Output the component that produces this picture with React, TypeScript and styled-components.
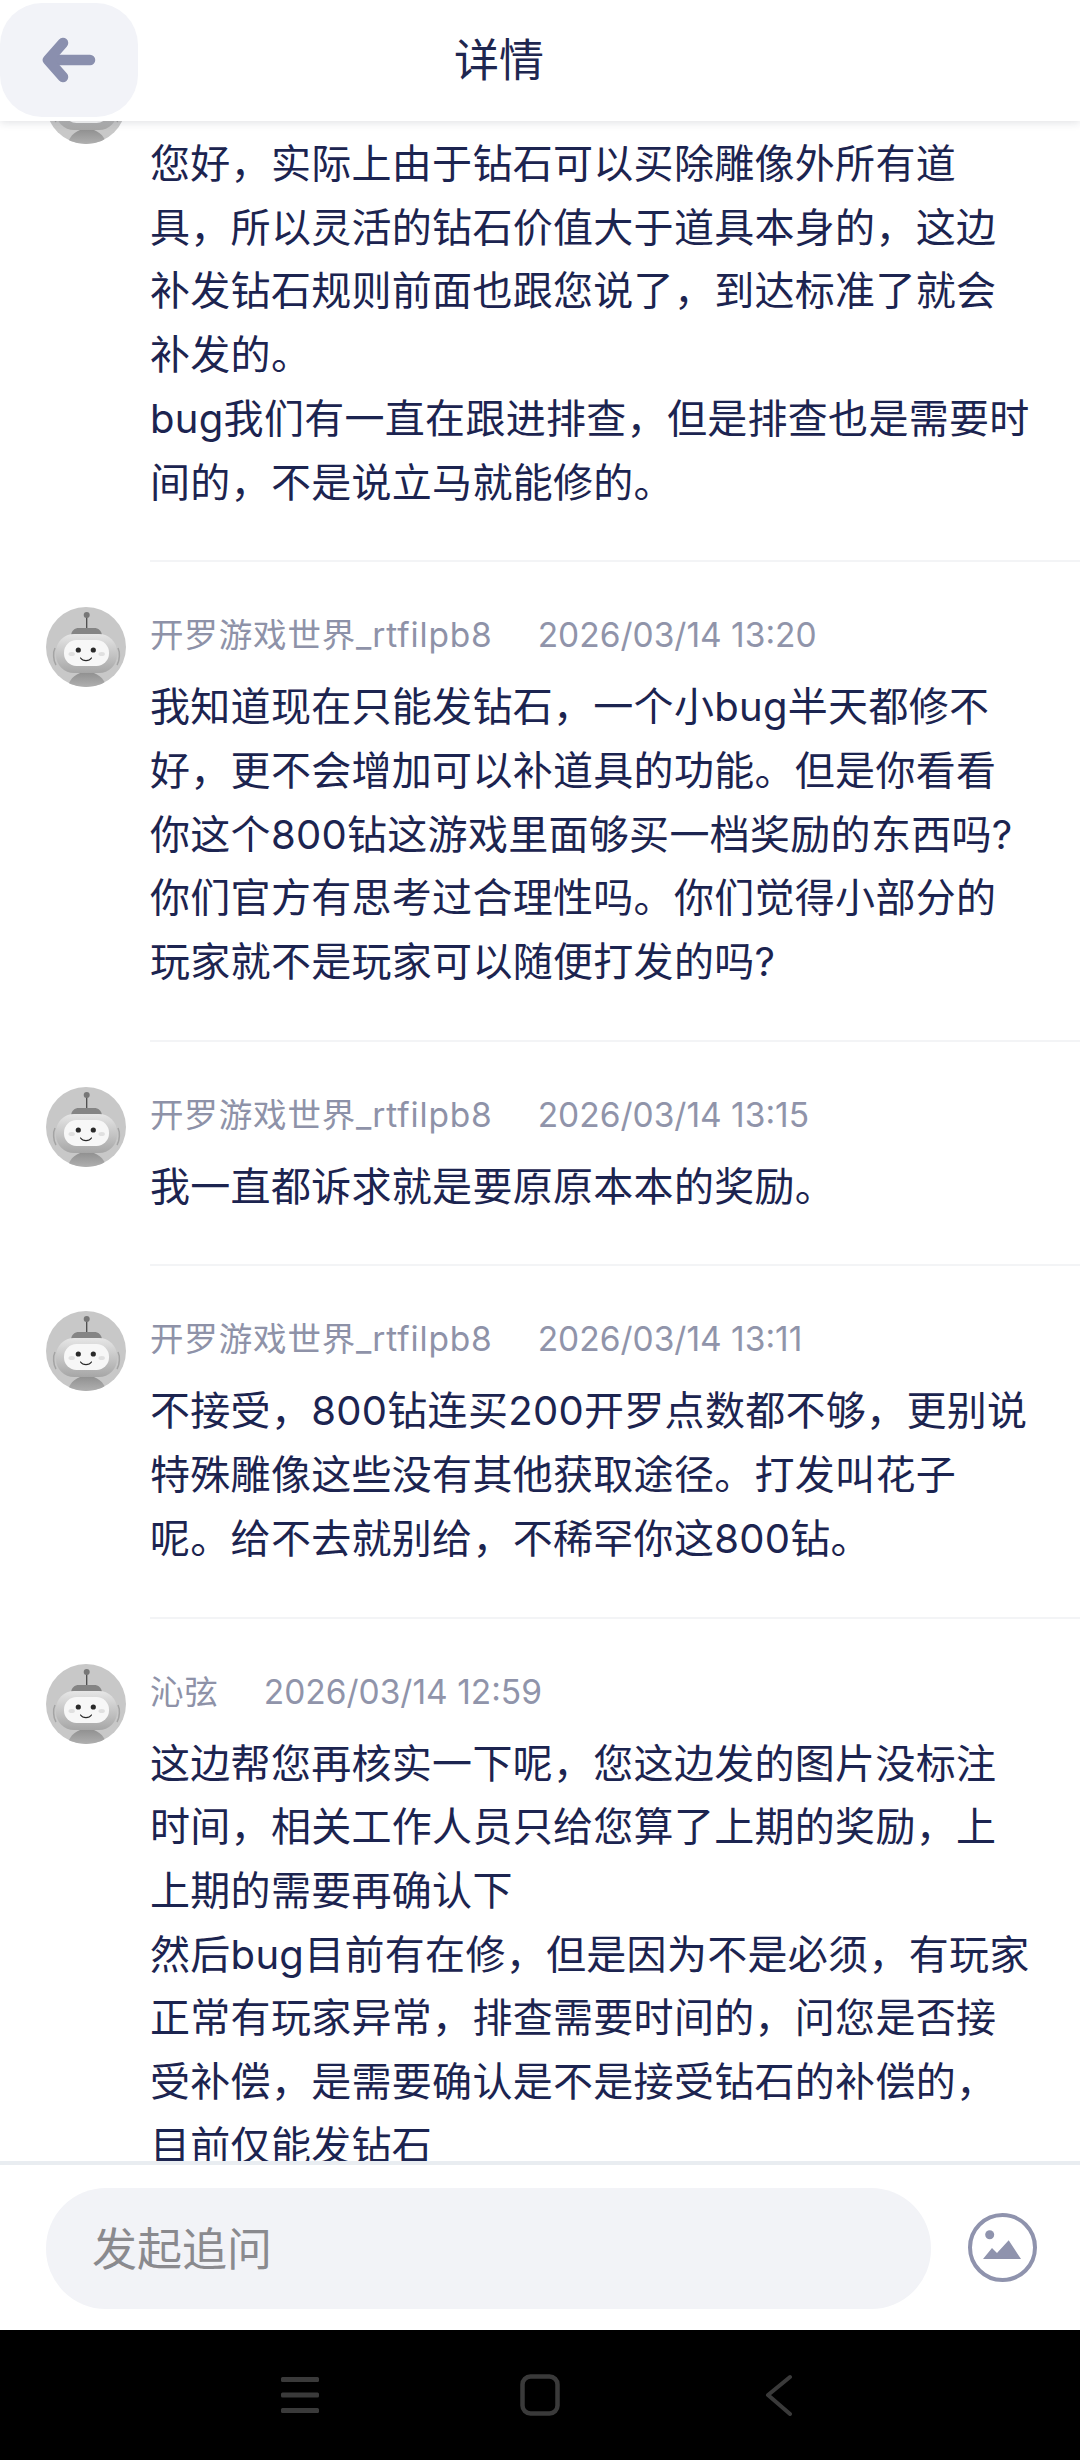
import React from "react";
import styled, { createGlobalStyle } from "styled-components";

const Global = createGlobalStyle`
  html, body { margin: 0; padding: 0; background: #fff; }
  body { font-family: "Noto Sans CJK SC", "Noto Sans", sans-serif; }
  * { box-sizing: border-box; }
`;

const Page = styled.div`
  width: 1080px;
  height: 2460px;
  display: flex;
  flex-direction: column;
  overflow: hidden;
  background: #fff;
`;

const Header = styled.header`
  position: relative;
  z-index: 2;
  flex: 0 0 121px;
  display: flex;
  align-items: flex-start;
  padding-top: 3px;
  background: #fff;
  box-shadow: 0 2px 8px rgba(40, 45, 70, 0.13);
`;

const BackButton = styled.div`
  width: 138px;
  height: 114px;
  border-radius: 42px;
  background: #f2f3f8;
  display: flex;
  align-items: center;
  justify-content: center;
`;

const Title = styled.h1`
  margin: 0 0 0 316px;
  font-size: 45px;
  line-height: 110px;
  font-weight: 400;
  color: #1f2750;
`;

const List = styled.main`
  flex: 1 1 0;
  min-height: 0;
  overflow: hidden;
`;

const ListInner = styled.div`
  margin-top: -102px;
`;

const Row = styled.article`
  display: flex;
  align-items: flex-start;
  gap: 24px;
  padding: 45px 0 0 46px;
`;

const Avatar = styled.svg`
  flex: 0 0 80px;
  width: 80px;
  height: 80px;
`;

const Content = styled.div`
  flex: 1;
  min-width: 0;
  padding-bottom: 46px;
  border-bottom: 2px solid #f3f4f6;
`;

const Meta = styled.div`
  display: flex;
  gap: 45px;
  height: 68px;
  font-size: 33.5px;
  line-height: 56px;
  color: #9094aa;
  font-family: "Inter", "Noto Sans CJK SC", sans-serif;
  font-weight: 400;
`;

const Name = styled.span`
  color: #8e92a8;
  letter-spacing: 0.85px;
`;

const Body = styled.p`
  margin: 0;
  white-space: pre-line;
  font-size: 40px;
  line-height: 63.7px;
  letter-spacing: 0.3px;
  color: #1c2450;
  font-family: "Inter", "Noto Sans CJK SC", sans-serif;
`;

const Footer = styled.footer`
  flex: 0 0 169px;
  display: flex;
  align-items: flex-start;
  gap: 37px;
  padding: 23px 43px 0 46px;
  border-top: 4px solid #e9edf1;
  background: #fff;
`;

const Input = styled.div`
  flex: 1;
  height: 121px;
  border-radius: 60px;
  background: #f2f3f7;
  padding-left: 46px;
  font-size: 45px;
  line-height: 118px;
  color: #8a8a8e;
`;

const ImageButton = styled.svg`
  flex: 0 0 69px;
  width: 69px;
  height: 69px;
  margin-top: 25px;
`;

const NavBar = styled.nav`
  flex: 0 0 130px;
  display: flex;
  align-items: center;
  justify-content: center;
  gap: 200px;
  background: #000;
`;

const NavIcon = styled.svg`
  width: 40px;
  height: 42px;
`;

const rows = [
  {
    name: "",
    date: "",
    text: "您好，实际上由于钻石可以买除雕像外所有道\n具，所以灵活的钻石价值大于道具本身的，这边\n补发钻石规则前面也跟您说了，到达标准了就会\n补发的。\nbug我们有一直在跟进排查，但是排查也是需要时\n间的，不是说立马就能修的。",
  },
  {
    name: "开罗游戏世界_rtfilpb8",
    date: "2026/03/14 13:20",
    text: "我知道现在只能发钻石，一个小bug半天都修不\n好，更不会增加可以补道具的功能。但是你看看\n你这个800钻这游戏里面够买一档奖励的东西吗?\n你们官方有思考过合理性吗。你们觉得小部分的\n玩家就不是玩家可以随便打发的吗?",
  },
  {
    name: "开罗游戏世界_rtfilpb8",
    date: "2026/03/14 13:15",
    text: "我一直都诉求就是要原原本本的奖励。",
  },
  {
    name: "开罗游戏世界_rtfilpb8",
    date: "2026/03/14 13:11",
    text: "不接受，800钻连买200开罗点数都不够，更别说\n特殊雕像这些没有其他获取途径。打发叫花子\n呢。给不去就别给，不稀罕你这800钻。",
  },
  {
    name: "沁弦",
    date: "2026/03/14 12:59",
    text: "这边帮您再核实一下呢，您这边发的图片没标注\n时间，相关工作人员只给您算了上期的奖励，上\n上期的需要再确认下\n然后bug目前有在修，但是因为不是必须，有玩家\n正常有玩家异常，排查需要时间的，问您是否接\n受补偿，是需要确认是不是接受钻石的补偿的，\n目前仅能发钻石",
  },
];

const RobotAvatar = ({ id }: { id: number }) => (
  <Avatar viewBox="0 0 80 80">
    <defs>
      <clipPath id={`avatar-clip-${id}`}>
        <circle cx="40" cy="40" r="40" />
      </clipPath>
      <linearGradient id={`avatar-head-${id}`} x1="0" y1="0" x2="0" y2="1">
        <stop offset="0" stopColor="#e6e6e6" />
        <stop offset="1" stopColor="#a6a6a6" />
      </linearGradient>
      <linearGradient id={`avatar-body-${id}`} x1="0" y1="0" x2="0" y2="1">
        <stop offset="0" stopColor="#8f8f8f" />
        <stop offset="1" stopColor="#b4b4b4" />
      </linearGradient>
    </defs>
    <g clipPath={`url(#avatar-clip-${id})`}>
      <rect width="80" height="80" fill="#c8c8c8" />
      <path d="M21 82c2-10 9-17 20-17s18 7 20 17z" fill={`url(#avatar-body-${id})`} />
      <line x1="40.7" y1="9" x2="40.7" y2="21" stroke="#4a4a4a" strokeWidth="1.3" />
      <circle cx="40.7" cy="8" r="3" fill="#777" />
      <path d="M25 28.5c.5-5 3.500-7.500 8-7.500h15c4.500 0 7.500 2.500 8 7.500z" fill="#858585" />
      <path d="M9 41c-2 4-2 12 1 17M72 41c2 4 2 12-1 17" fill="none" stroke="#a4a4a4" strokeWidth="1.5" />
      <rect x="10" y="27" width="61" height="39" rx="18" fill={`url(#avatar-head-${id})`} />
      <rect x="18" y="33" width="45" height="26" rx="12.500" fill="#f7f7f7" />
      <ellipse cx="25.700" cy="47" rx="3.200" ry="2" fill="#e0e0e0" />
      <ellipse cx="55.700" cy="47" rx="3.200" ry="2" fill="#e0e0e0" />
      <circle cx="32.300" cy="43" r="2.600" fill="#2a2a2a" />
      <circle cx="47.300" cy="43" r="2.600" fill="#2a2a2a" />
      <path d="M34.500 51c2.500 3.500 8.500 3.500 11 0" fill="none" stroke="#2a2a2a" strokeWidth="1.200" strokeLinecap="round" />
    </g>
  </Avatar>
);

export default function App() {
  return (
    <Page>
      <Global />
      <Header>
        <BackButton>
          <svg width="54" height="46" viewBox="0 0 54 46" fill="none" stroke="#8a8fae" strokeWidth="10.5" strokeLinecap="round" strokeLinejoin="round">
            <path d="M48 23H8" />
            <path d="M21 6 6 23l15 17" />
          </svg>
        </BackButton>
        <Title>详情</Title>
      </Header>
      <List>
        <ListInner>
          {rows.map((r, i) => (
            <Row key={i}>
              <RobotAvatar id={i} />
              <Content>
                <Meta>
                  <Name>{r.name}</Name>
                  <span>{r.date}</span>
                </Meta>
                <Body>{r.text}</Body>
              </Content>
            </Row>
          ))}
        </ListInner>
      </List>
      <Footer>
        <Input>发起追问</Input>
        <ImageButton viewBox="0 0 69 69">
          <circle cx="34.5" cy="34.5" r="32.5" fill="none" stroke="#8f93ad" strokeWidth="4" />
          <circle cx="21.7" cy="21.7" r="4.5" fill="#8f93ad" />
          <path d="M15 46 24 35l5 5 11.700-12.700L53 46z" fill="#8f93ad" />
        </ImageButton>
      </Footer>
      <NavBar>
        <NavIcon viewBox="0 0 40 42" fill="#3a3a3a">
          <rect x="1" y="3" width="38" height="5" rx="1.500" />
          <rect x="1" y="18.500" width="38" height="5" rx="1.500" />
          <rect x="1" y="34" width="38" height="5" rx="1.500" />
        </NavIcon>
        <NavIcon viewBox="0 0 40 42" fill="none" stroke="#3a3a3a" strokeWidth="4.500">
          <rect x="2.500" y="2.500" width="35" height="37" rx="8" />
        </NavIcon>
        <NavIcon viewBox="0 0 40 42" fill="none" stroke="#3a3a3a" strokeWidth="4" strokeLinecap="round" strokeLinejoin="round">
          <path d="M30 3 8 21l22 19" />
        </NavIcon>
      </NavBar>
    </Page>
  );
}
